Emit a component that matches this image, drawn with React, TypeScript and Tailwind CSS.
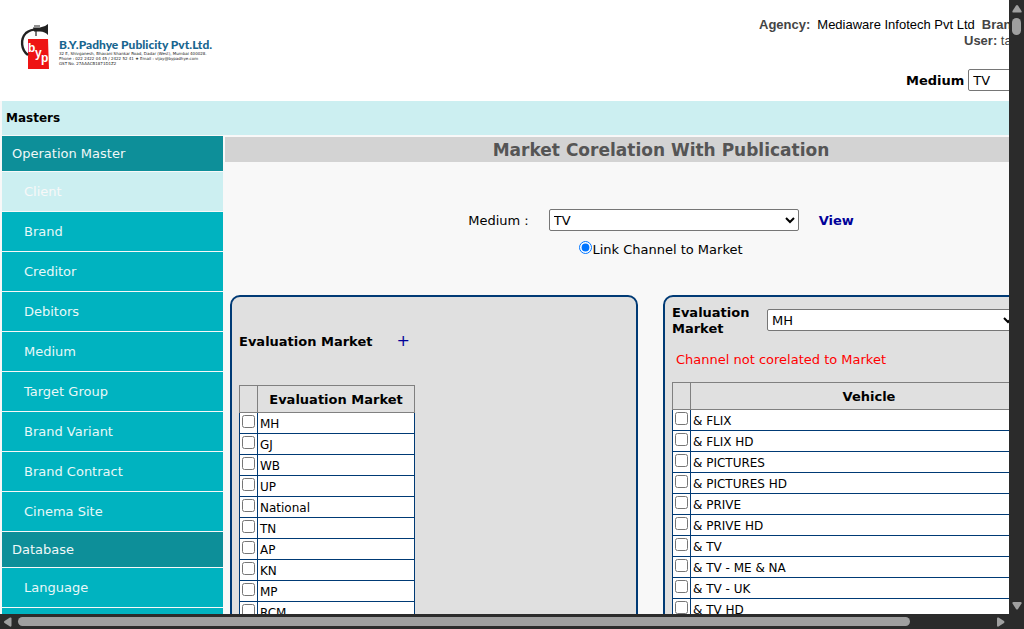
import { useState } from "react";

const operationItems = [
  "Client",
  "Brand",
  "Creditor",
  "Debitors",
  "Medium",
  "Target Group",
  "Brand Variant",
  "Brand Contract",
  "Cinema Site",
];
const databaseItems = ["Language", "State"];

const markets = ["MH", "GJ", "WB", "UP", "National", "TN", "AP", "KN", "MP", "RCM"];
const vehicles = [
  "& FLIX",
  "& FLIX HD",
  "& PICTURES",
  "& PICTURES HD",
  "& PRIVE",
  "& PRIVE HD",
  "& TV",
  "& TV - ME & NA",
  "& TV - UK",
  "& TV HD",
];

const selectClass =
  "h-[22px] rounded-[2px] border border-[#767676] bg-white text-[13px] text-black";

function Logo() {
  return (
    <div className="flex items-start gap-2 pt-6 pl-5">
      <svg width="31" height="46" viewBox="0 0 31 46" aria-hidden="true">
        <path d="M8 15 H28 L29 45 H8 Z" fill="#ee1414" />
        <path
          d="M8 31 C1 26 0 15 6 9 C10 5.500 15 5 21 5.500"
          fill="none"
          stroke="#222"
          strokeWidth="2.400"
        />
        <path
          d="M13 3.500 L20 3.500 Q25 3 28 0 V11 Q25 7.500 20 7.500 L14 7.500 Z"
          fill="#222"
        />
        <path d="M14 2 H20 M16 7 V12" stroke="#222" strokeWidth="1.200" />
        <text fill="#fff" fontFamily="Liberation Sans" fontWeight="700" fontSize="12">
          <tspan x="8" y="28">b</tspan>
          <tspan x="15" y="33">y</tspan>
          <tspan x="21" y="38">p</tspan>
        </text>
      </svg>
      <div className="pt-[14px] whitespace-nowrap">
        <div className="font-['Lato'] text-[12px] leading-[13px] font-black text-[#17658f]">
          B.Y.Padhye Publicity Pvt.Ltd.
        </div>
        <div className="text-[4px] leading-[5px] text-[#222]">
          <p>32 E, Shivganesh, Bhavani Shankar Road, Dadar (West), Mumbai 400028.</p>
          <p>Phone : 022 2422 04 45 / 2422 52 41 ★ Email : vijay@bypadhye.com</p>
          <p>GST No. 27AAACB1871D1Z2</p>
        </div>
      </div>
    </div>
  );
}

function Header() {
  return (
    <header className="flex h-[101px] justify-between bg-white">
      <Logo />
      <div className="w-[347px] overflow-hidden whitespace-nowrap">
        <div className="pt-[17px] font-['Liberation_Sans'] text-[13px] leading-4 text-black">
          <p className="flex gap-[7px]">
            <b className="text-[#444]">Agency:</b>
            <span>Mediaware Infotech Pvt Ltd</span>
            <b className="text-[#444]">Brand:</b>
          </p>
          <p className="pl-[205px] text-[#444]">
            <b>User:</b> tanvi
          </p>
        </div>
        <div className="flex items-center gap-1 pt-5 pl-[147px]">
          <label htmlFor="header-medium" className="pt-[2px] font-bold">
            Medium
          </label>
          <select id="header-medium" className={`${selectClass} w-[120px]`}>
            <option>TV</option>
            <option>Press</option>
          </select>
        </div>
      </div>
    </header>
  );
}

function MenuHeading({ label }: { label: string }) {
  return (
    <a
      href="#"
      className="flex h-9 items-center border-b border-[#f8f8f8] bg-[#0d8f99] pl-[10px] text-[#f0f8f8]"
    >
      {label}
    </a>
  );
}

function MenuItem({ label, active }: { label: string; active?: boolean }) {
  return (
    <a
      href="#"
      className={`flex h-10 items-center border-b border-[#f8f8f8] pl-[22px] ${
        active ? "bg-[#cceff1] text-[#f8f8f8]" : "bg-[#00b3c0] text-[#e8f8f8]"
      }`}
    >
      {label}
    </a>
  );
}

function Sidebar() {
  return (
    <nav className="ml-[2px] w-[221px] shrink-0">
      <MenuHeading label="Operation Master" />
      {operationItems.map((item) => (
        <MenuItem key={item} label={item} active={item === "Client"} />
      ))}
      <MenuHeading label="Database" />
      {databaseItems.map((item) => (
        <MenuItem key={item} label={item} />
      ))}
    </nav>
  );
}

function CheckTable({
  title,
  rows,
  width,
}: {
  title: string;
  rows: string[];
  width: string;
}) {
  return (
    <table className={`table-fixed border-collapse text-[12px] ${width}`}>
      <thead>
        <tr className="h-[27px] text-[13px]">
          <th className="w-[18px] border border-[#808080]" />
          <th className="border border-[#808080] p-0 pt-[2px] font-bold">{title}</th>
        </tr>
      </thead>
      <tbody>
        {rows.map((row, i) => (
          <tr key={row} className="h-[21px] bg-white">
            <td className="border border-[#003a75] p-0 align-top">
              <input
                type="checkbox"
                id={`${title}-${i}`}
                className="mt-[2px] ml-[2px] block size-[13px]"
              />
            </td>
            <td className="border border-[#003a75] p-0 pl-[2px]">
              <label htmlFor={`${title}-${i}`} className="block h-5 leading-[22px]">
                {row}
              </label>
            </td>
          </tr>
        ))}
      </tbody>
    </table>
  );
}

function Main() {
  const [mode, setMode] = useState("channel");
  return (
    <main className="mr-[9px] ml-[2px] flex-1">
      <h1 className="mt-px bg-[#d3d3d3] pt-[2px] text-center text-[17px] leading-[23px] font-bold text-[#555]">
        Market Corelation With Publication
      </h1>
      <div className="flex items-center justify-center pt-[47px]">
        <label htmlFor="medium" className="pt-[2px]">
          Medium :
        </label>
        <select id="medium" className={`${selectClass} mx-5 w-[250px]`}>
          <option>TV</option>
          <option>Press</option>
        </select>
        <a href="#" className="pt-[2px] font-bold text-[#000099]">
          View
        </a>
      </div>
      <div className="flex justify-center pt-[10px]">
        <label className="flex h-4 leading-[18px]">
          <input
            type="radio"
            name="mode"
            value="channel"
            checked={mode === "channel"}
            onChange={(e) => setMode(e.target.value)}
            className="size-[13px]"
          />
          Link Channel to Market
        </label>
      </div>
      <div className="flex items-stretch gap-[25px] px-[5px] pt-[38px]">
        <section className="w-[408px] rounded-[10px] border-2 border-[#003a75] bg-[#e0e0e0] px-[7px] pb-6">
          <div className="flex h-[88px] items-center gap-6">
            <h2 className="pt-[2px] font-bold">Evaluation Market</h2>
            <button type="button" className="text-[16px] text-[#000099]">
              +
            </button>
          </div>
          <CheckTable title="Evaluation Market" rows={markets} width="w-[176px]" />
        </section>
        <section className="flex-1 rounded-[10px] border-2 border-[#003a75] bg-[#e0e0e0] px-[7px] pb-6">
          <div className="flex h-[46px] items-center">
            <label
              htmlFor="evaluation-market"
              className="w-[95px] pt-[2px] leading-4 font-bold"
            >
              Evaluation Market
            </label>
            <select id="evaluation-market" className={`${selectClass} w-[250px]`}>
              {markets.map((m) => (
                <option key={m}>{m}</option>
              ))}
            </select>
          </div>
          <p className="pt-[6px] pb-3 pl-1 leading-[21px] text-[#ff0000]">
            Channel not corelated to Market
          </p>
          <CheckTable title="Vehicle" rows={vehicles} width="w-[376px]" />
        </section>
      </div>
    </main>
  );
}

export default function App() {
  return (
    <div className="flex h-screen flex-col overflow-hidden bg-[#2b2b2b] font-['DejaVu_Sans',sans-serif] text-[13px] text-black">
      <div className="flex min-h-0 flex-1">
        <div className="min-w-0 flex-1 overflow-hidden bg-[#f8f8f8]">
          <div className="min-w-[1106px]">
            <Header />
            <div className="mb-px ml-[2px] flex h-[34px] items-center bg-[#cceff1] pl-1 text-[12px] font-bold">
              Masters
            </div>
            <div className="flex">
              <Sidebar />
              <Main />
            </div>
          </div>
        </div>
        <div className="flex w-[15px] flex-col items-center justify-between" aria-hidden="true">
          <div className="flex flex-col items-center gap-[5px] pt-[5px]">
            <svg width="10" height="8" viewBox="0 0 10 8" fill="#9f9f9f">
              <path d="M4 0.500 Q5 -0.500 6 0.500 L9.500 6 Q10 7.500 8.500 7.500 H1.500 Q0 7.500 0.500 6 Z" />
            </svg>
            <div className="h-[17px] w-[9px] rounded-full bg-[#9f9f9f]" />
          </div>
          <svg className="mb-1" width="10" height="8" viewBox="0 0 10 8" fill="#9f9f9f">
            <path d="M4 7 Q5 8 6 7 L9.500 1.500 Q10 0 8.500 0 H1.500 Q0 0 0.500 1.500 Z" />
          </svg>
        </div>
      </div>
      <div className="flex h-[15px] items-center pr-[19px] pl-1" aria-hidden="true">
        <svg width="8" height="10" viewBox="0 0 8 10" fill="#9f9f9f">
          <path d="M0.500 4 Q-0.500 5 0.500 6 L6 9.500 Q7.500 10 7.500 8.500 V1.500 Q7.500 0 6 0.500 Z" />
        </svg>
        <div className="mx-[6px] flex-1">
          <div className="h-[9px] w-11/12 rounded-full bg-[#9f9f9f]" />
        </div>
        <svg width="8" height="10" viewBox="0 0 8 10" fill="#9f9f9f">
          <path d="M7 4 Q8 5 7 6 L1.500 9.500 Q0 10 0 8.500 V1.500 Q0 0 1.500 0.500 Z" />
        </svg>
      </div>
    </div>
  );
}
